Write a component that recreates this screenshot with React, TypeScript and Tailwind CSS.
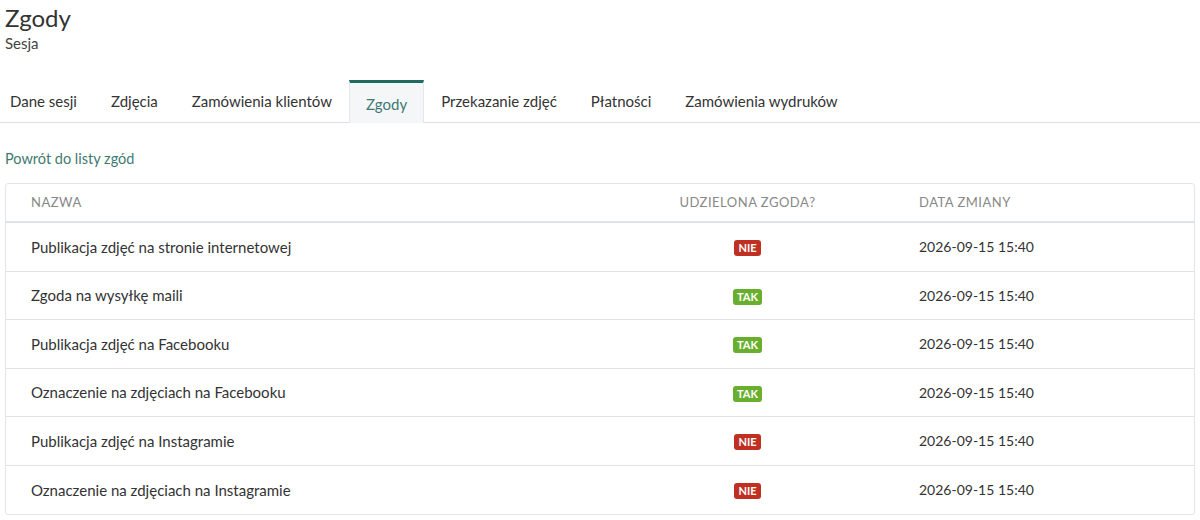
const tabs = [
  "Dane sesji",
  "Zdjęcia",
  "Zamówienia klientów",
  "Zgody",
  "Przekazanie zdjęć",
  "Płatności",
  "Zamówienia wydruków",
]

const consents = [
  { name: "Publikacja zdjęć na stronie internetowej", granted: false, date: "2026-09-15 15:40" },
  { name: "Zgoda na wysyłkę maili", granted: true, date: "2026-09-15 15:40" },
  { name: "Publikacja zdjęć na Facebooku", granted: true, date: "2026-09-15 15:40" },
  { name: "Oznaczenie na zdjęciach na Facebooku", granted: true, date: "2026-09-15 15:40" },
  { name: "Publikacja zdjęć na Instagramie", granted: false, date: "2026-09-15 15:40" },
  { name: "Oznaczenie na zdjęciach na Instagramie", granted: false, date: "2026-09-15 15:40" },
]

export default function App() {
  return (
    <div className="min-h-[520px] bg-white text-[#333] font-['Lato','Open_Sans',sans-serif]">
      {/* Nagłówek */}
      <div className="px-[5px] pt-[3px]">
        <h1 className="text-[24px] leading-[30px] text-[#333]">Zgody</h1>
        <p className="text-[15px] leading-[20px] text-[#444]">Sesja</p>
      </div>

      {/* Zakładki */}
      <div className="mt-[27px] flex border-b border-[#dde1e5]">
        {tabs.map((tab, index) => (
          <div
            key={index}
            className={
              tab === "Zgody"
                ? "h-[43px] px-[16px] flex items-center border-t-[3px] border-x border-t-[#1f6b5f] border-x-[#e3e7ea] bg-[#f4f6f8] text-[#3f7a72] text-[15px] -mb-px pt-[2px]"
                : "h-[42px] px-[17px] flex items-center text-[15px] text-[#333] first:pl-[10px] first:pr-[17px]"
            }
          >
            {tab}
          </div>
        ))}
      </div>

      {/* Powrót */}
      <div className="px-[5px] mt-[26px] text-[14.5px] leading-[20px] text-[#3f7a72]">
        Powrót do listy zgód
      </div>

      {/* Tabela */}
      <div className="mx-[5px] mt-[14px] border border-[#e3e6ea] rounded-[3px] overflow-hidden">
        <div className="h-[39px] flex items-center text-[13px] tracking-[0.5px] text-[#888] border-b-2 border-[#dfe2e7]">
          <div className="w-[570px] pl-[25px]">NAZWA</div>
          <div className="w-[343px] text-center">UDZIELONA ZGODA?</div>
          <div className="flex-1">DATA ZMIANY</div>
        </div>
        {consents.map((consent, index) => (
          <div
            key={index}
            className="h-[48.5px] flex items-center text-[15px] text-[#333] border-b border-[#dfe2e7] last:border-b-0"
          >
            <div className="w-[570px] pl-[25px]">{consent.name}</div>
            <div className="w-[343px] flex justify-center pt-[3px]">
              {consent.granted ? (
                <span className="px-[4px] h-[16px] leading-[16px] rounded-[3px] bg-[#6aae2f] text-white text-[11px] font-bold">
                  TAK
                </span>
              ) : (
                <span className="px-[4px] h-[16px] leading-[16px] rounded-[3px] bg-[#bf2f22] text-white text-[11px] font-bold">
                  NIE
                </span>
              )}
            </div>
            <div className="flex-1 text-[14px]">{consent.date}</div>
          </div>
        ))}
      </div>
    </div>
  )
}
